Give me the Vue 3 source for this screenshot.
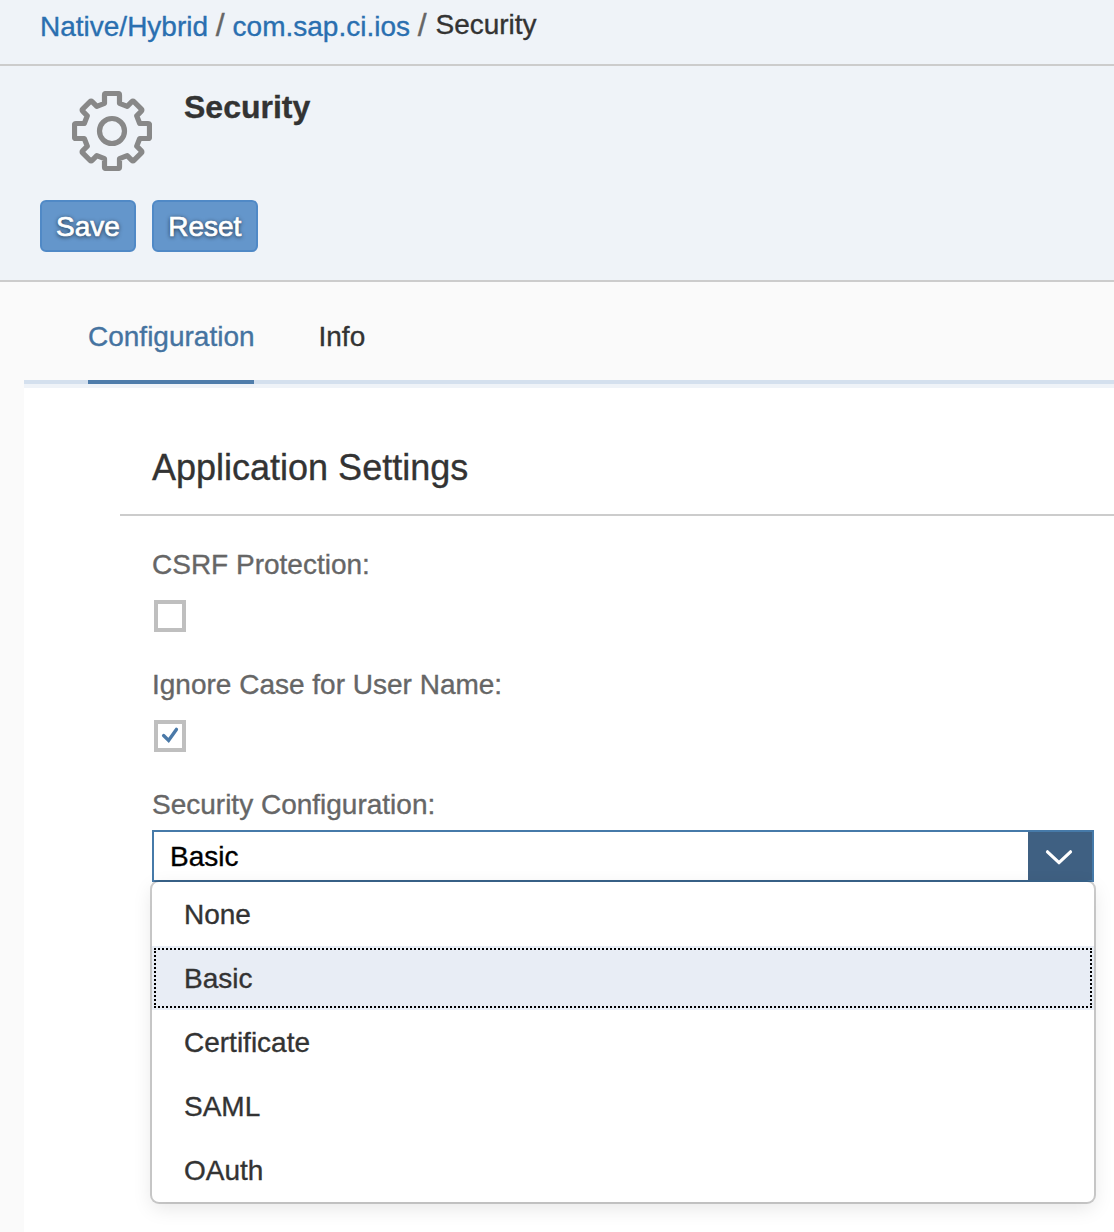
<script setup>
import { ref } from 'vue'

const crumbs = ['Native/Hybrid', 'com.sap.ci.ios']
const tabs = ['Configuration', 'Info']
const activeTab = ref('Configuration')
const options = ['None', 'Basic', 'Certificate', 'SAML', 'OAuth']
const selected = ref('Basic')
const csrf = ref(false)
const ignoreCase = ref(true)
</script>

<template>
  <div class="page">
    <nav class="crumbs">
      <template v-for="c in crumbs" :key="c">
        <a class="link">{{ c }}</a><span class="slash">/</span>
      </template>
      <span class="current">Security</span>
    </nav>

    <header class="head">
      <div class="title-row">
        <svg class="gear" viewBox="-40 -40 80 80" fill="none" stroke="#888" stroke-width="5.2">
          <path
            stroke-linejoin="round"
            d="M-7.5-36Q-7.5-37.5-6-37.5H6Q7.5-37.5 7.5-36V-27.7L15.2-24.7 19.9-29.4Q20.9-30.4 21.9-29.4L29.4-21.9Q30.4-20.9 29.4-19.9L24.7-15.2 27.7-7.5H36Q37.5-7.5 37.5-6V6Q37.5 7.5 36 7.5H27.7L24.7 15.2 29.4 19.9Q30.4 20.9 29.4 21.9L21.9 29.4Q20.9 30.4 19.9 29.4L15.2 24.7 7.5 27.7V36Q7.5 37.5 6 37.5H-6Q-7.5 37.5-7.5 36V27.7L-15.2 24.7-19.9 29.4Q-20.9 30.4-21.9 29.4L-29.4 21.9Q-30.4 20.9-29.4 19.9L-24.7 15.2-27.7 7.5H-36Q-37.5 7.5-37.5 6V-6Q-37.5-7.5-36-7.5H-27.7L-24.7-15.2-29.4-19.9Q-30.4-20.9-29.4-21.9L-21.9-29.4Q-20.9-30.4-19.9-29.4L-15.2-24.7-7.5-27.7Z"
          />
          <circle r="12.5" />
        </svg>
        <h1>Security</h1>
      </div>
      <div class="actions">
        <button class="btn">Save</button>
        <button class="btn">Reset</button>
      </div>
    </header>

    <div class="tabs">
      <div
        v-for="t in tabs"
        :key="t"
        class="tab"
        :class="{ active: t === activeTab }"
        @click="activeTab = t"
      >{{ t }}</div>
    </div>

    <main class="panel">
      <h2>Application Settings</h2>
      <div class="form">
        <div class="field">
          <label>CSRF Protection:</label>
          <div class="check" @click="csrf = !csrf">
            <svg v-if="csrf" viewBox="0 0 24 24"><path d="M5.6 11.6 10.6 16.4 18.4 5.4" /></svg>
          </div>
        </div>
        <div class="field">
          <label>Ignore Case for User Name:</label>
          <div class="check" @click="ignoreCase = !ignoreCase">
            <svg v-if="ignoreCase" viewBox="0 0 24 24"><path d="M5.6 11.6 10.6 16.4 18.4 5.4" /></svg>
          </div>
        </div>
        <div class="field">
          <label>Security Configuration:</label>
          <div class="combo">
            <span class="value">{{ selected }}</span>
            <span class="arrow">
              <svg viewBox="0 0 28 16"><path d="M2.5 2.8 14 13.7 25.5 2.8" /></svg>
            </span>
            <ul class="menu">
              <li
                v-for="o in options"
                :key="o"
                :class="{ selected: o === selected }"
                @click="selected = o"
              >{{ o }}</li>
            </ul>
          </div>
        </div>
      </div>
    </main>
  </div>
</template>

<style>
body {
  background: #fafafa;
}
</style>

<style scoped>
* {
  box-sizing: border-box;
}
.page {
  height: 1232px;
  overflow: hidden;
  display: flex;
  flex-direction: column;
  background: #fafafa;
  color: #333;
  font: 28px/31px "Liberation Sans", Arial, sans-serif;
  -webkit-text-stroke: 0.35px;
}
.crumbs {
  display: flex;
  height: 66px;
  padding: 11px 0 0 40px;
  background: #eff3f8;
  border-bottom: 2px solid #ccc;
}
.link {
  color: #2a6fb0;
}
.slash {
  width: 24.5px;
  margin-top: -4px;
  text-align: center;
  font-size: 32px;
  line-height: 36px;
  color: #666;
}
.current {
  margin-top: -2px;
  margin-left: 1px;
}
.head {
  height: 216px;
  padding: 25px 40px 0;
  background: #eff3f8;
  border-bottom: 2px solid #ccc;
}
.title-row {
  display: flex;
  gap: 32px;
  padding-left: 32px;
}
.gear {
  width: 80px;
  height: 80px;
}
h1 {
  margin: -2px 0 0;
  font-size: 32px;
  line-height: 36px;
}
.actions {
  display: flex;
  gap: 16px;
  margin-top: 29px;
}
.btn {
  height: 52px;
  padding: 9px 14px 8px;
  background: #6496cb;
  border: 2px solid #5089c6;
  border-radius: 6px;
  color: #fff;
  font: inherit;
  text-shadow: 0 1px 4px rgba(0, 0, 0, 0.8);
  -webkit-text-stroke: 0.7px #fff;
}
.btn:last-child {
  min-width: 106px;
}
.tabs {
  display: flex;
  gap: 64.5px;
  height: 102px;
  margin-left: 24px;
  padding-left: 64px;
  border-bottom: 4px solid #d4e0ee;
}
.tab {
  height: 102px;
  padding-top: 39px;
}
.tab.active {
  width: 166px;
  color: #4573a0;
  border-bottom: 4px solid #4f7dab;
}
.panel {
  flex: 1;
  margin-left: 24px;
  padding: 54px 0 0 96px;
  background: #fff;
  border-top: 4px solid #eff3f8;
}
h2 {
  height: 74px;
  margin: 0;
  padding: 5px 32px 0;
  font-size: 36px;
  font-weight: 400;
  line-height: 41px;
  border-bottom: 2px solid #ccc;
}
.form {
  padding: 32px 20px 0 32px;
}
.field {
  height: 120px;
}
label {
  display: block;
  height: 52px;
  padding-top: 1px;
  color: #666;
}
.check {
  width: 32px;
  height: 32px;
  margin-left: 2px;
  border: 4px solid #bfbfbf;
}
.check svg {
  display: block;
  width: 24px;
  height: 24px;
}
.check path {
  fill: none;
  stroke: #4a79a8;
  stroke-width: 3.4;
  stroke-linecap: round;
}
.combo {
  position: relative;
  display: flex;
  height: 52px;
  margin-top: -10px;
  border: 2px solid #467aa9;
  background: #fff;
}
.value {
  flex: 1;
  padding: 9px 16px 0;
  color: #000;
}
.arrow {
  display: flex;
  align-items: center;
  justify-content: center;
  width: 64px;
  background: #3f6082;
}
.arrow svg {
  width: 28px;
  height: 16px;
  margin: 2px 2px 0 0;
}
.arrow path {
  fill: none;
  stroke: #fff;
  stroke-width: 3.2;
  stroke-linecap: round;
  stroke-linejoin: round;
}
.menu {
  position: absolute;
  top: 50px;
  left: -2px;
  right: -2px;
  margin: 0;
  padding: 0;
  list-style: none;
  background: #fff;
  border-radius: 7px;
  box-shadow: 0 0 0 2px rgba(0, 0, 0, 0.19), 0 6px 20px rgba(0, 0, 0, 0.1);
}
.menu li {
  position: relative;
  height: 64px;
  padding: 17px 32px 0;
}
.menu li.selected {
  background: #e8edf5;
}
.menu li.selected::after {
  content: "";
  position: absolute;
  inset: 2px;
  border: 2px dotted #000;
}
</style>
